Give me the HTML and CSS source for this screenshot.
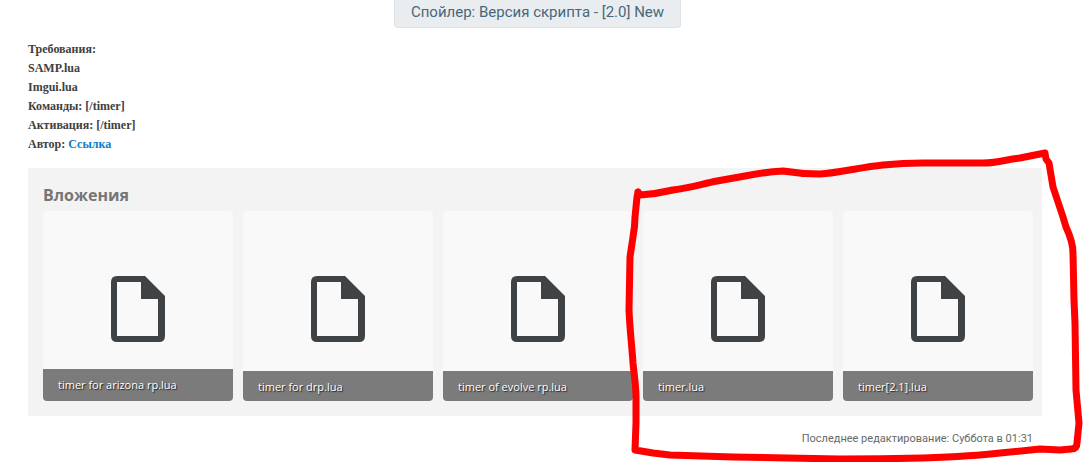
FILE: index.html
```html
<!DOCTYPE html>
<html lang="ru">
<head>
    <meta charset="UTF-8">
    <meta name="viewport" content="width=device-width, initial-scale=1.0">
    <title>Версия скрипта - [2.0] New</title>
    <link rel="stylesheet" href="styles.css">
</head>
<body>
    <svg class="icon-defs" aria-hidden="true">
        <symbol id="file" viewBox="0 0 54 66">
            <path fill-rule="evenodd" d="M6 0H34L54 20V60Q54 66 48 66H6Q0 66 0 60V6Q0 0 6 0ZM6 6V60H47V23H30V6Z"/>
        </symbol>
    </svg>
    <main class="post">
        <button type="button" class="spoiler">Спойлер: Версия скрипта - [2.0] New</button>
        <div class="message">
            <div>Требования:</div>
            <div>SAMP.lua</div>
            <div>Imgui.lua</div>
            <div>Команды: [/timer]</div>
            <div>Активация: [/timer]</div>
            <div>Автор: <a href="#">Ссылка</a></div>
        </div>
        <section class="attachments">
            <h2>Вложения</h2>
            <div class="files">
                <a class="file" href="#">
                    <svg class="file-icon"><use href="#file"/></svg>
                    <span class="file-name tall">timer for arizona rp.lua</span>
                </a>
                <a class="file" href="#">
                    <svg class="file-icon"><use href="#file"/></svg>
                    <span class="file-name">timer for drp.lua</span>
                </a>
                <a class="file" href="#">
                    <svg class="file-icon"><use href="#file"/></svg>
                    <span class="file-name">timer of evolve rp.lua</span>
                </a>
                <a class="file" href="#">
                    <svg class="file-icon"><use href="#file"/></svg>
                    <span class="file-name">timer.lua</span>
                </a>
                <a class="file" href="#">
                    <svg class="file-icon"><use href="#file"/></svg>
                    <span class="file-name">timer[2.1].lua</span>
                </a>
            </div>
        </section>
        <div class="last-edit">Последнее редактирование: Суббота в 01:31</div>
    </main>
    <!-- hand-drawn marker around the last two files -->
    <svg class="marker" viewBox="0 0 1083 462" aria-hidden="true">
        <path d="M638 192L640 195Q656 194 673 190C690 188 702 184 717 181L745 176Q765 172 783 171C795 173 808 174 820 174C838 173 862 167 883 165Q903 163 923 163H983C998 163 1008 159 1020 158L1045 153L1046 159L1049 163L1053 187L1063 217L1066 227Q1073 242 1073 253L1074 300L1075 323L1076 390L1079 423L1077 443Q1077 449 1071 449L1060 450L1040 449L1000 453C975 456 950 457 923 458Q880 459 840 459L733 457L670 455L653 453L635 450L636 423V397C636 385 634 374 633 363C632 347 630 332 629 310L630 257L633 237Q635 226 635 217L637 197L638 192"/>
    </svg>
</body>
</html>
```
FILE: styles.css
```css
* {
    box-sizing: border-box;
}
body {
    position: relative;
    margin: 0;
    background: #fff;
    font-family: "Open Sans", "Noto Sans", sans-serif;
    overflow-x: hidden;
}
.icon-defs {
    display: none;
}
.post {
    display: flex;
    flex-direction: column;
    padding: 0 41px 14px 28px;
}
.spoiler {
    align-self: center;
    height: 28px;
    margin-left: 5px;
    padding: 0 16px 4px;
    border: 1px solid #dfe3e6;
    border-top: none;
    border-radius: 0 0 4px 4px;
    background: #e9edf0;
    color: #47677c;
    font-family: Roboto, sans-serif;
    font-size: 15px;
    line-height: 24px;
    white-space: nowrap;
    cursor: pointer;
}
.message {
    margin: 12px 0 14px;
    color: #404040;
    font-family: "Liberation Serif", serif;
    font-size: 12px;
    font-weight: bold;
    line-height: 19px;
}
.message a {
    color: #0b7cc9;
    text-decoration: none;
}
.attachments {
    padding: 15px 9px 15px 15px;
    background: #f3f3f3;
}
.attachments h2 {
    margin: 0 0 4px;
    color: #757575;
    font-size: 16px;
    line-height: 24px;
}
.files {
    display: grid;
    grid-template-columns: repeat(5, 1fr);
    gap: 10px;
}
.file {
    display: grid;
    aspect-ratio: 1;
    border-radius: 4px;
    background: #f9f9f9;
    overflow: hidden;
    text-decoration: none;
}
.file-icon,
.file-name {
    grid-area: 1 / 1;
}
.file-icon {
    place-self: center;
    width: 54px;
    height: 66px;
    margin-top: 6px;
    fill: #404345;
}
.file-name {
    align-self: end;
    padding: 7px 15px 5px;
    background: #7b7b7b;
    color: #fff;
    font-size: 11px;
    line-height: 18px;
    text-shadow: 1px 1px 1px #222;
}
.file-name.tall {
    padding-bottom: 7px;
}
.last-edit {
    margin-top: 14px;
    padding-right: 9px;
    color: #686868;
    font-family: Roboto, sans-serif;
    font-size: 11px;
    line-height: 18px;
    text-align: right;
}
.marker {
    position: absolute;
    top: 0;
    left: 0;
    width: 100%;
    fill: none;
    stroke: #f00;
    stroke-width: 7;
    stroke-linecap: round;
    stroke-linejoin: round;
    pointer-events: none;
}
```
